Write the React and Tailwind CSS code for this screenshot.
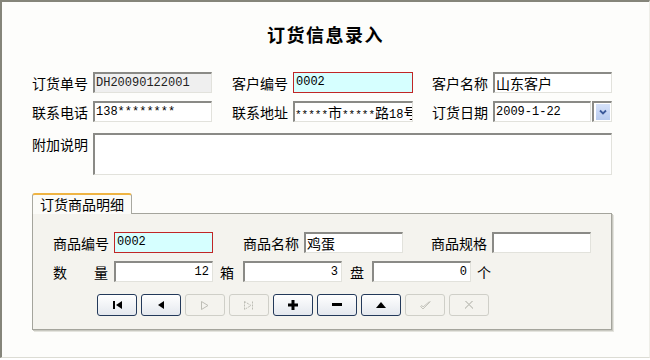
import React from "react";

const CJK = "font-['Noto_Sans_CJK_SC',sans-serif]";
const MONO = "font-['Liberation_Mono','Noto_Sans_CJK_SC',monospace]";

const sunken =
  "border-t-2 border-l-2 border-t-[#8a8a86] border-l-[#8a8a86] border-b border-r border-b-[#e2e2dc] border-r-[#e2e2dc]";

function Label({ children, className = "" }) {
  return (
    <div className={`w-[61px] shrink-0 whitespace-nowrap overflow-visible text-[14px] leading-[20px] text-black ${CJK} ${className}`}>
      {children}
    </div>
  );
}

function Btn({ enabled, children }) {
  return (
    <div
      className={
        enabled
          ? "w-[40px] h-[22px] rounded-[3px] border border-[#23395a] bg-gradient-to-b from-[#ffffff] to-[#e4e8ee] flex items-center justify-center"
          : "w-[40px] h-[22px] rounded-[3px] border border-[#cfcfc8] bg-[#f4f3ee] flex items-center justify-center"
      }
    >
      {children}
    </div>
  );
}

export default function App() {
  return (
    <div className="w-[650px] h-[360px] bg-white overflow-hidden">
      <div className="w-[650px] h-[358px] bg-[#fdfdfb] border-l-2 border-t-2 border-l-[#85857a] border-t-[#85857a] border-b border-b-[#dcdcd4] border-r border-r-[#eeeee8]">
        {/* Title */}
        <div className={`mt-[19px] h-[26px] leading-[26px] text-center text-[18px] font-bold tracking-[1.5px] text-black ${CJK}`}>
          订货信息录入
        </div>

        {/* Row 1 */}
        <div className="mt-[25px] pl-[30px] flex items-center h-[21px]">
          <Label>订货单号</Label>
          <div className={`w-[119px] h-[21px] ${sunken} bg-[#efefef] text-[12px] leading-[18px] ${MONO} text-[#222] pl-[1px]`}>
            DH20090122001
          </div>
          <div className="w-[20px]" />
          <Label>客户编号</Label>
          <div className={`w-[120px] h-[21px] border border-[#c02626] bg-[#d6ffff] text-[12px] leading-[19px] ${MONO} text-black pl-[2px]`}>
            0002
          </div>
          <div className="w-[19px]" />
          <Label>客户名称</Label>
          <div className={`w-[119px] h-[21px] ${sunken} bg-white text-[14px] leading-[18px] ${CJK} text-black pl-[1px]`}>
            山东客户
          </div>
        </div>

        {/* Row 2 */}
        <div className="mt-[8px] pl-[30px] flex items-center h-[21px]">
          <Label>联系电话</Label>
          <div className={`w-[119px] h-[21px] ${sunken} bg-white text-[12px] leading-[18px] ${MONO} text-black pl-[1px]`}>
            138********
          </div>
          <div className="w-[20px]" />
          <Label>联系地址</Label>
          <div className={`w-[120px] h-[21px] ${sunken} bg-white text-[11px] leading-[18px] ${MONO} text-black overflow-hidden whitespace-nowrap`}>
            *****<span className={`text-[14px] ${CJK}`}>市</span>*****<span className={`text-[14px] ${CJK}`}>路</span><span className="text-[12px]">18</span><span className={`text-[14px] ${CJK}`}>号</span>
          </div>
          <div className="w-[19px]" />
          <Label>订货日期</Label>
          <div className={`w-[98px] h-[21px] ${sunken} bg-white text-[12px] leading-[18px] ${MONO} text-black pl-[1px]`}>
            2009-1-22
          </div>
          <div className={`ml-[1px] w-[20px] h-[21px] ${sunken} bg-white p-[1px] pl-[2px]`}>
            <div className="w-full h-full bg-gradient-to-b from-[#d6e2fa] to-[#b8cbef] flex items-center justify-center">
              <svg width="8" height="6" viewBox="0 0 8 6">
                <path d="M1 1.5 L4 4.5 L7 1.5" fill="none" stroke="#3c5a9a" strokeWidth="1.8" />
              </svg>
            </div>
          </div>
        </div>

        {/* Row 3 */}
        <div className="mt-[11px] pl-[30px] flex items-start">
          <Label className="pt-[1px]">附加说明</Label>
          <div className={`w-[519px] h-[42px] ${sunken} bg-white`} />
        </div>

        {/* Tab section */}
        <div className="mt-[18px] pl-[30px]">
          <div className="flex">
            <div className={`w-[100px] h-[21px] -mb-[1px] relative z-10 rounded-t-[3px] border-t-2 border-t-[#efb443] border-l border-r border-l-[#a8a8a0] border-r-[#a8a8a0] bg-[#fbfbf8] pl-[7px] whitespace-nowrap text-[14px] leading-[18px] ${CJK} text-black`}>
              订货商品明细
            </div>
          </div>
          <div className="w-[580px] h-[117px] border border-[#a4a49c] bg-[#f4f3ee] shadow-[1px_1px_0_#c8c8c0,2px_2px_0_#e4e4de] pt-[18px] pl-[20px]">
            {/* Row A */}
            <div className="flex items-center h-[21px]">
              <Label>商品编号</Label>
              <div className={`w-[99px] h-[21px] border border-[#c02626] bg-[#d6ffff] text-[12px] leading-[19px] ${MONO} text-black pl-[2px]`}>
                0002
              </div>
              <div className="w-[30px]" />
              <Label>商品名称</Label>
              <div className={`w-[99px] h-[21px] ${sunken} bg-white text-[14px] leading-[18px] ${CJK} text-black pl-[1px]`}>
                鸡蛋
              </div>
              <div className="w-[28px]" />
              <Label>商品规格</Label>
              <div className={`w-[99px] h-[21px] ${sunken} bg-white`} />
            </div>
            {/* Row B */}
            <div className="mt-[8px] flex items-center h-[21px]">
              <Label className="flex justify-between pr-[6px]">
                <span>数</span>
                <span>量</span>
              </Label>
              <div className={`w-[99px] h-[21px] ${sunken} bg-white text-[12px] leading-[18px] ${MONO} text-black text-right pr-[3px]`}>
                12
              </div>
              <div className={`w-[30px] pl-[7px] text-[14px] leading-[20px] ${CJK} text-black`}>箱</div>
              <div className={`w-[99px] h-[21px] ${sunken} bg-white text-[12px] leading-[18px] ${MONO} text-black text-right pr-[3px]`}>
                3
              </div>
              <div className={`w-[30px] pl-[8px] text-[14px] leading-[20px] ${CJK} text-black`}>盘</div>
              <div className={`w-[99px] h-[21px] ${sunken} bg-white text-[12px] leading-[18px] ${MONO} text-black text-right pr-[3px]`}>
                0
              </div>
              <div className={`pl-[6px] text-[14px] leading-[20px] ${CJK} text-black`}>个</div>
            </div>
            {/* Row C buttons */}
            <div className="mt-[12px] ml-[44px] flex gap-[4px]">
              <Btn enabled>
                <svg width="9" height="8" viewBox="0 0 9 8">
                  <rect x="0" y="0" width="2" height="8" fill="#000" />
                  <path d="M9 0 L9 8 L3 4 Z" fill="#000" />
                </svg>
              </Btn>
              <Btn enabled>
                <svg width="6" height="8" viewBox="0 0 6 8">
                  <path d="M6 0 L6 8 L0 4 Z" fill="#000" />
                </svg>
              </Btn>
              <Btn>
                <svg width="8" height="9" viewBox="0 0 8 9">
                  <path d="M0.5 0.5 L0.5 8.5 M0.5 0.5 L7 4.5 L0.5 8.5" fill="none" stroke="#bdbdb5" strokeWidth="1" />
                </svg>
              </Btn>
              <Btn>
                <svg width="10" height="9" viewBox="0 0 10 9">
                  <path d="M0.5 0.5 L0.5 8.5 M0.5 0.5 L7 4.5 L0.5 8.5 M8.5 0.5 L8.5 8.5" fill="none" stroke="#bdbdb5" strokeWidth="1" strokeDasharray="2 1" />
                </svg>
              </Btn>
              <Btn enabled>
                <svg width="10" height="10" viewBox="0 0 10 10">
                  <path d="M3.5 0 H6.5 V3.5 H10 V6.5 H6.5 V10 H3.5 V6.5 H0 V3.5 H3.5 Z" fill="#000" />
                </svg>
              </Btn>
              <Btn enabled>
                <svg width="10" height="4" viewBox="0 0 10 4">
                  <rect x="0" y="0" width="10" height="3" fill="#000" />
                </svg>
              </Btn>
              <Btn enabled>
                <svg width="10" height="6" viewBox="0 0 10 6">
                  <path d="M0 6 L10 6 L5 0 Z" fill="#000" />
                </svg>
              </Btn>
              <Btn>
                <svg width="11" height="9" viewBox="0 0 11 9">
                  <path d="M0.5 5.5 L3 8 L10.5 0.5 M0.5 5.5 L2 4.5 L3 6 L9.5 0.5" fill="none" stroke="#c4c4bc" strokeWidth="1" />
                </svg>
              </Btn>
              <Btn>
                <svg width="10" height="10" viewBox="0 0 10 10">
                  <path d="M1 1 L9 9 M9 1 L1 9 M2 1 L9 8 M8 1 L1 8" fill="none" stroke="#c4c4bc" strokeWidth="0.8" />
                </svg>
              </Btn>
            </div>
          </div>
        </div>
      </div>
    </div>
  );
}
